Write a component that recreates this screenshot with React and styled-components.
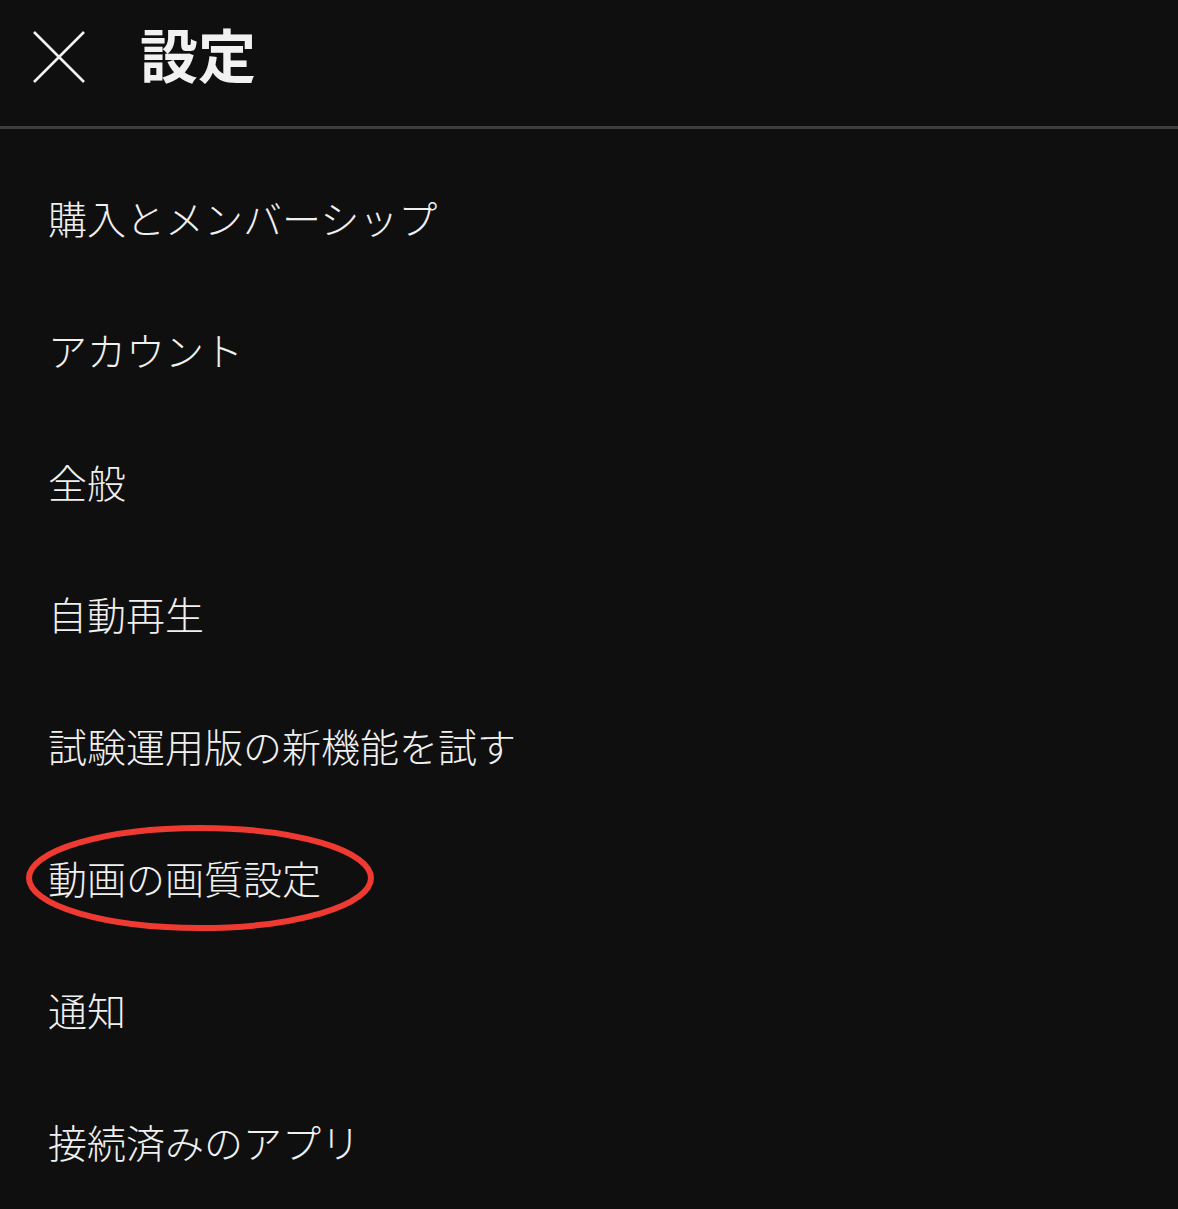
import React from "react";
import styled, { createGlobalStyle } from "styled-components";

const Global = createGlobalStyle`
  html, body { margin: 0; padding: 0; background: #0f0f0f; }
  body { font-family: "Noto Sans CJK JP", "Noto Sans", sans-serif; color: #f1f1f1; }
`;

const Page = styled.div`
  width: 1178px;
  min-height: 1209px;
  background: #0f0f0f;
  overflow: hidden;
`;

const Header = styled.header`
  height: 112px;
  padding-bottom: 14px;
  display: flex;
  align-items: center;
  border-bottom: 3px solid #3d3d3d;
  box-sizing: content-box;
`;

const CloseButton = styled.button`
  width: 58px;
  height: 58px;
  margin-left: 30px;
  margin-right: 52px;
  margin-top: 2px;
  padding: 0;
  background: none;
  border: none;
  display: flex;
  align-items: center;
  justify-content: center;
  color: #f1f1f1;
`;

const Title = styled.h1`
  margin: 0 0 6px;
  font-size: 58px;
  font-weight: 700;
  line-height: 1;
  color: #f1f1f1;
`;

const List = styled.ul`
  list-style: none;
  margin: 0;
  padding: 22px 0 0;
`;

const Item = styled.li`
  position: relative;
  height: 132px;
  display: flex;
  align-items: center;
  padding-left: 48px;
  font-size: 39px;
  font-weight: 300;
  line-height: 1;
  color: #f0f0f0;
`;

const Label = styled.span`
  position: relative;
  z-index: 1;
`;

const Circle = styled.svg`
  position: absolute;
  left: 24px;
  top: 12px;
  width: 352px;
  height: 110px;
  pointer-events: none;
`;

const items = [
  "購入とメンバーシップ",
  "アカウント",
  "全般",
  "自動再生",
  "試験運用版の新機能を試す",
  "動画の画質設定",
  "通知",
  "接続済みのアプリ",
];

export default function App() {
  return (
    <Page>
      <Global />
      <Header>
        <CloseButton aria-label="閉じる">
          <svg width="54" height="54" viewBox="0 0 54 54">
            <path d="M2 2 L52 52 M52 2 L2 52" stroke="#f1f1f1" strokeWidth="2.6" fill="none" />
          </svg>
        </CloseButton>
        <Title>設定</Title>
      </Header>
      <List>
        {items.map((t) => (
          <Item key={t}>
            <Label>{t}</Label>
            {t === "動画の画質設定" && (
              <Circle viewBox="0 0 352 110">
                <ellipse cx="176" cy="55" rx="171" ry="50" fill="none" stroke="#ef3a32" strokeWidth="6" />
              </Circle>
            )}
          </Item>
        ))}
      </List>
    </Page>
  );
}
